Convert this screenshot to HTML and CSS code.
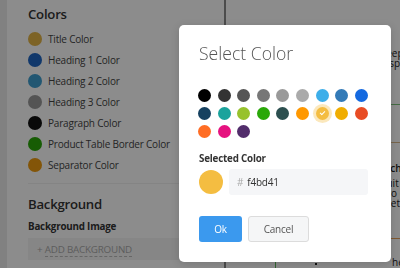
FILE: index.html
```html
<!DOCTYPE html>
<html lang="en">
<head>
    <meta charset="UTF-8">
    <title>Template Colors</title>
    <link rel="stylesheet" href="styles.css">
</head>
<body>
    <div class="editor">
        <aside class="sidebar">
            <section class="panel-section colors-section">
                <h3 class="panel-title">Colors</h3>
                <ul class="color-list">
                    <li><span class="dot dot-title"></span>Title Color</li>
                    <li><span class="dot dot-h1"></span>Heading 1 Color</li>
                    <li><span class="dot dot-h2"></span>Heading 2 Color</li>
                    <li><span class="dot dot-h3"></span>Heading 3 Color</li>
                    <li><span class="dot dot-paragraph"></span>Paragraph Color</li>
                    <li><span class="dot dot-border"></span>Product Table Border Color</li>
                    <li><span class="dot dot-separator"></span>Separator Color</li>
                </ul>
            </section>
            <section class="panel-section">
                <h3 class="panel-title">Background</h3>
                <div class="field-label">Background Image</div>
                <button class="add-background">+ <span>ADD BACKGROUND</span></button>
            </section>
        </aside>

        <main class="preview">
            <p class="preview-text intro">keep it<br>a spa</p>
            <hr class="rule rule-green">
            <hr class="rule rule-tan">
            <h4 class="preview-heading">Rich</h4>
            <p class="preview-text details">Suit<br>Pro c<br>Diet</p>
            <hr class="rule rule-orange">
            <div class="product-table">
                <div class="table-cell">
                    <span class="table-dot"></span>
                </div>
                <div class="table-cell">
                    <p class="preview-text">here</p>
                </div>
            </div>
        </main>
    </div>

    <div class="overlay"></div>

    <div class="modal">
        <h2 class="modal-title">Select Color</h2>
        <div id="palette" class="palette">
            <!-- swatches are inserted here -->
        </div>
        <div class="field-label">Selected Color</div>
        <div class="selected-row">
            <span id="selectedPreview" class="selected-preview"></span>
            <div class="hex-input">
                <span class="hash">#</span>
                <span id="hexValue">f4bd41</span>
            </div>
        </div>
        <div class="modal-actions">
            <button class="btn btn-ok">Ok</button>
            <button class="btn btn-cancel">Cancel</button>
        </div>
    </div>

    <script>
        document.addEventListener('DOMContentLoaded', () => {
            const colors = [
                '000000', '333333', '555555', '777777', '999999', 'aaaaaa', '3daee9', '337ab7', '1469e0',
                '164160', '1ba39c', '97c22c', '2aa809', '2c4f4f', 'ff9800', 'f4bd41', 'f0ad00', 'e84c24',
                'ff6d24', 'e6127f', '522d6b'
            ];
            const palette = document.getElementById('palette');
            const hexValue = document.getElementById('hexValue');
            const preview = document.getElementById('selectedPreview');

            colors.forEach(color => {
                const swatch = document.createElement('span');
                swatch.classList.add('swatch');
                swatch.style.backgroundColor = '#' + color;
                swatch.dataset.color = color;
                if (color === hexValue.textContent) {
                    swatch.classList.add('active');
                }

                swatch.addEventListener('click', () => {
                    palette.querySelectorAll('.swatch.active').forEach(s => s.classList.remove('active'));
                    swatch.classList.add('active');
                    hexValue.textContent = color;
                    preview.style.backgroundColor = '#' + color;
                });

                palette.appendChild(swatch);
            });
        });
    </script>
</body>
</html>
```

FILE: styles.css
```css
body {
    margin: 0;
    font-family: "Open Sans", "Noto Sans", sans-serif;
    background-color: #ebebeb;
    overflow: hidden;
    height: 268px;
}
.editor {
    display: flex;
    height: 100%;
}
.sidebar {
    margin-left: 7px;
    width: 219px;
    flex-shrink: 0;
    background-color: white;
    border-right: 2px solid #8a8a8a;
    padding: 4px 0 0 21px;
    box-sizing: border-box;
}
.panel-section {
    padding-bottom: 8px;
}
.colors-section {
    border-bottom: 1px solid #f0f0f0;
}
.panel-title {
    margin: 0 0 4px;
    font-size: 13.2px;
    line-height: 20px;
    font-weight: 600;
    letter-spacing: -0.25px;
    color: #333;
}
.colors-section + .panel-section {
    padding-top: 10px;
}
.colors-section + .panel-section .panel-title {
    margin-bottom: 5px;
}
.color-list {
    list-style: none;
    margin: 0;
    padding: 0;
}
.color-list li {
    display: flex;
    align-items: center;
    gap: 6px;
    height: 21px;
    font-size: 10px;
    letter-spacing: -0.2px;
    color: #444;
}
.dot {
    width: 14px;
    height: 14px;
    border-radius: 50%;
}
.dot-title { background-color: #e3b445; }
.dot-h1 { background-color: #1f66c4; }
.dot-h2 { background-color: #3e9fcf; }
.dot-h3 { background-color: #9a9a9a; }
.dot-paragraph { background-color: #111; }
.dot-border { background-color: #2aa809; }
.dot-separator { background-color: #ee9b10; }
.field-label {
    font-size: 9.8px;
    line-height: 16px;
    font-weight: 700;
    letter-spacing: -0.2px;
    color: #333;
}
.add-background {
    display: block;
    margin-top: 3px;
    width: 100%;
    height: 22px;
    border: none;
    background-color: #f4f4f4;
    text-align: left;
    padding: 0 9px;
    font-family: inherit;
    font-size: 9.8px;
    letter-spacing: -0.2px;
    color: #aaa;
}
.add-background span {
    border-bottom: 1px dashed #bbb;
}
.preview {
    flex: 1;
    background-color: white;
    padding-top: 48px;
    overflow: hidden;
    min-width: 0;
}
.preview-text {
    margin: 0;
    font-size: 10px;
    line-height: 10px;
    color: #222;
    white-space: nowrap;
}
.intro,
.details,
.preview-heading {
    padding-left: 155px;
}
.preview-heading {
    margin: 18px 0 3px;
    font-size: 10px;
    line-height: 14px;
    font-weight: 600;
    color: #222;
}
.rule {
    border: none;
    margin: 0;
    height: 1px;
}
.rule-green {
    background-color: #7bc47b;
    margin-top: 36px;
}
.rule-tan {
    background-color: #d9b88a;
    margin-top: 37px;
}
.rule-orange {
    background-color: #e7a35c;
    margin-top: 30px;
}
.product-table {
    display: flex;
    margin: 18px 0 0 49px;
    border-left: 1px solid #5cb85c;
    height: 40px;
}
.table-cell:first-child {
    width: 110px;
    flex-shrink: 0;
    padding: 6px 0 0 39px;
    box-sizing: border-box;
}
.table-cell:last-child {
    padding-left: 6px;
}
.table-dot {
    display: block;
    width: 2px;
    height: 2px;
    background-color: #222;
}
.overlay {
    position: fixed;
    inset: 0;
    background-color: rgba(0, 0, 0, 0.45);
}
.modal {
    position: absolute;
    left: 179px;
    top: 25px;
    width: 212px;
    box-sizing: border-box;
    padding: 15px 20px 20px;
    background-color: white;
    border-radius: 5px;
    box-shadow: 0 2px 8px rgba(0, 0, 0, 0.15);
}
.modal-title {
    margin: 0;
    font-size: 17.6px;
    line-height: 27px;
    font-weight: 300;
    color: #555;
}
.palette {
    display: grid;
    grid-template-columns: repeat(9, 13px);
    column-gap: 6.6px;
    row-gap: 5px;
    margin: 22px 0 13px -1px;
}
.swatch {
    width: 13px;
    height: 13px;
    border-radius: 50%;
    cursor: pointer;
    position: relative;
}
.swatch.active {
    box-shadow: 0 0 0 3px rgba(244, 189, 65, 0.35);
}
.swatch.active::after {
    content: "";
    position: absolute;
    left: 4px;
    top: 3.5px;
    width: 4px;
    height: 2px;
    border-left: 1.5px solid white;
    border-bottom: 1.5px solid white;
    transform: rotate(-45deg);
}
.selected-row {
    display: flex;
    align-items: center;
    gap: 6px;
    margin-top: 2px;
}
.selected-preview {
    width: 24px;
    height: 24px;
    border-radius: 50%;
    background-color: #f4bd41;
}
.hex-input {
    width: 139px;
    height: 26px;
    box-sizing: border-box;
    background-color: #f5f6f8;
    border-radius: 3px;
    display: flex;
    align-items: center;
    padding-left: 8px;
    font-size: 10px;
    letter-spacing: -0.2px;
    color: #333;
}
.hash {
    color: #aaa;
    margin-right: 4px;
}
.modal-actions {
    display: flex;
    gap: 6px;
    margin-top: 21px;
}
.btn {
    height: 26px;
    border-radius: 3px;
    font-family: inherit;
    font-size: 10px;
    letter-spacing: -0.2px;
    cursor: pointer;
}
.btn-ok {
    width: 43px;
    border: none;
    background-color: #3b99ee;
    color: white;
}
.btn-cancel {
    width: 61px;
    border: 1px solid #dcdcdc;
    background-color: #f5f6f7;
    color: #555;
}
```
